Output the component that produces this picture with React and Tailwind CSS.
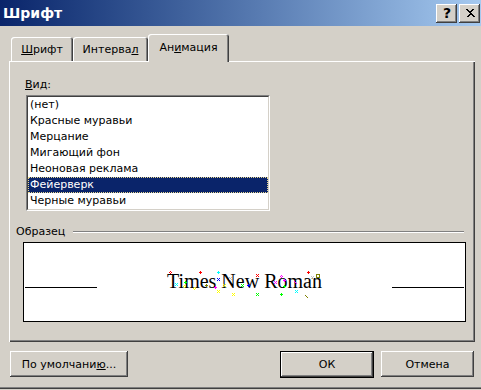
import React from 'react'

const RAISED = 'shadow-[inset_-1px_-1px_#404040,inset_1px_1px_#ffffff,inset_-2px_-2px_#808080,inset_2px_2px_#d4d0c8]'

const ITEMS = ['(нет)', 'Красные муравьи', 'Мерцание', 'Мигающий фон', 'Неоновая реклама', 'Фейерверк', 'Черные муравьи']

// sparkle bits around the sample text: [x, y, color, kind]
const SPARKS = [
  [146, 29, '#ff0000', 'dot'], [176, 29, '#ff0000', 'plus'], [194, 29, '#00ffff', 'plus'],
  [194, 36, '#0000ff', 'x'], [206, 35, '#c0c0c0', 'x'], [233, 32, '#ff0000', 'x'],
  [260, 37, '#ff00ff', 'plus'], [257, 33, '#ff00ff', 'dot'], [284, 29, '#ff0000', 'plus'],
  [293, 32, '#808000', 'sq'], [288, 34, '#c0c0c0', 'x'], [152, 41, '#00ffff', 'x'],
  [161, 39, '#00ff00', 'plus'], [182, 42, '#808000', 'plus'], [191, 44, '#ff00ff', 'plus'],
  [194, 48, '#ffff00', 'x'], [200, 42, '#ffff00', 'x'], [218, 42, '#00ff00', 'x'],
  [224, 42, '#0000ff', 'plus'], [209, 51, '#ffff00', 'x'], [233, 51, '#00ff00', 'x'],
  [251, 39, '#ff00ff', 'x'], [260, 43, '#00ff00', 'plus'], [257, 51, '#00ff00', 'plus'],
  [270, 38, '#ff00ff', 'line'], [272, 48, '#00ffff', 'x'], [281, 52, '#808000', 'line'],
  [160, 43, '#ffff00', 'dot'], [170, 45, '#ffff00', 'dot'],
]

function Spark({ x, y, c, k }) {
  if (k === 'plus') return (
    <g fill={c}>
      <rect x={x - 1} y={y} width="3" height="1" />
      <rect x={x} y={y - 1} width="1" height="3" />
    </g>
  )
  if (k === 'x') return (
    <g fill={c}>
      <rect x={x - 1} y={y - 1} width="1" height="1" />
      <rect x={x + 1} y={y - 1} width="1" height="1" />
      <rect x={x} y={y} width="1" height="1" />
      <rect x={x - 1} y={y + 1} width="1" height="1" />
      <rect x={x + 1} y={y + 1} width="1" height="1" />
    </g>
  )
  if (k === 'sq') return <rect x={x - 1} y={y - 1} width="3" height="3" fill="none" stroke={c} strokeWidth="1" shapeRendering="crispEdges" />
  if (k === 'line') return (
    <g fill={c}>
      <rect x={x} y={y} width="1" height="1" />
      <rect x={x + 1} y={y + 1} width="1" height="1" />
      <rect x={x + 2} y={y + 2} width="1" height="1" />
    </g>
  )
  return (
    <g fill={c}>
      <rect x={x} y={y - 1} width="1" height="1" />
      <rect x={x - 1} y={y} width="1" height="1" />
      <rect x={x + 1} y={y} width="1" height="1" />
      <rect x={x} y={y + 1} width="1" height="1" />
    </g>
  )
}

function Tab({ children, active, w }) {
  if (active) return (
    <div className={`${w} h-[28px] -mb-px relative z-10 bg-[#d4d0c8] rounded-t-[3px] shadow-[inset_1px_1px_#ffffff,inset_-1px_0_#404040,inset_-2px_0_#808080] flex justify-center pt-[7px]`}>
      {children}
    </div>
  )
  return (
    <div className={`${w} h-[24px] rounded-t-[3px] shadow-[inset_1px_1px_#ffffff,inset_-1px_0_#404040,inset_-2px_0_#808080] flex justify-center pt-[6px]`}>
      {children}
    </div>
  )
}

export default function App() {
  return (
    <div className="w-[481px] h-[390px] bg-[#d4d0c8] overflow-hidden font-['DejaVu_Sans',sans-serif] text-[11px] leading-[13px] text-black">
      {/* Title bar */}
      <div className="h-[26px] bg-linear-to-r from-[#0a246a] to-[#a6caf0] flex items-center justify-between">
        <span className="pl-[3px] text-white font-bold text-[14px] leading-[16px]">Шрифт</span>
        <div className="flex gap-[2px] mr-[1px]">
          <div className={`w-[21px] h-[19px] bg-[#d4d0c8] ${RAISED} flex items-center justify-center font-bold text-[14px] leading-none pl-px`}>?</div>
          <div className={`w-[21px] h-[19px] bg-[#d4d0c8] ${RAISED} flex items-center justify-center`}>
            <svg width="10" height="9" viewBox="0 0 10 9" shapeRendering="crispEdges">
              <path d="M1 0h2v1h1v1h2v-1h1v-1h2v1h-1v1h-1v1h-1v1h1v1h1v1h1v1h1v1h-2v-1h-1v-1h-2v1h-1v1h-2v-1h1v-1h1v-1h1v-1h-1v-1h-1v-1h-1z" fill="#000" />
            </svg>
          </div>
        </div>
      </div>

      {/* Tabs + panel */}
      <div className="mt-[8px] ml-[9px] w-[466px]">
        <div className="flex items-end h-[27px] pl-[2px]">
          <Tab w="w-[62px]"><span><span className="underline">Ш</span>рифт</span></Tab>
          <Tab w="w-[75px]"><span>Интерва<span className="underline">л</span></span></Tab>
          <Tab active w="w-[81px]"><span>Ан<span className="underline">и</span>мация</span></Tab>
        </div>
        <div className="h-[281px] shadow-[inset_1px_1px_#ffffff,inset_-1px_-1px_#404040,inset_-2px_-2px_#808080] pt-[17px]">
          <div className="ml-[16px]"><span className="underline">В</span>ид:</div>

          {/* List */}
          <div className="ml-[17px] mt-[4px] w-[244px] h-[116px] bg-white border-t border-l border-t-[#808080] border-l-[#808080] border-b border-r border-b-white border-r-white">
            <div className="h-full border-t border-l border-t-[#404040] border-l-[#404040] border-b border-r border-b-[#d4d0c8] border-r-[#d4d0c8]">
              {ITEMS.map((it, i) => (
                <div key={it} className={i === 5
                  ? 'h-[16px] leading-[14px] pl-px bg-[#0a246a] text-white border border-dotted border-[#e8d890]'
                  : 'h-[16px] leading-[16px] pl-[2px]'}>
                  {it}
                </div>
              ))}
            </div>
          </div>

          {/* Sample group */}
          <div className="ml-[7px] mt-[14px] w-[448px] flex items-center">
            <span>Образец</span>
            <div className="flex-1 ml-[8px] border-t border-t-[#808080] border-b border-b-white" />
          </div>
          <div className="ml-[14px] mt-[4px] w-[443px] h-[80px] bg-white border border-black relative">
            <div className="flex items-start pt-[28px] px-px">
              <div className="w-[72px] h-px bg-black mt-[16px]" />
              <div className="flex-1 text-center font-['Liberation_Serif',serif] text-[20px] leading-[20px]">Times New Roman</div>
              <div className="w-[72px] h-px bg-black mt-[16px]" />
            </div>
            <svg className="absolute left-0 top-0" width="441" height="78" viewBox="0 0 441 78" shapeRendering="crispEdges">
              {SPARKS.map(([x, y, c, k], i) => <Spark key={i} x={x} y={y} c={c} k={k} />)}
            </svg>
          </div>
        </div>
      </div>

      {/* Buttons */}
      <div className="mt-[9px] flex items-start pl-[10px] pr-[7px]">
        <div className={`w-[118px] h-[26px] ${RAISED} flex items-center justify-center`}>
          <span>По умолчани<span className="underline">ю</span>...</span>
        </div>
        <div className="flex-1" />
        <div className="w-[94px] h-[27px] border border-black">
          <div className={`w-full h-full ${RAISED} flex items-center justify-center`}>ОК</div>
        </div>
        <div className={`ml-[7px] w-[93px] h-[26px] ${RAISED} flex items-center justify-center`}>Отмена</div>
      </div>

      <div className="mt-[9px] h-px bg-[#808080]" />
      <div className="h-px bg-[#404040]" />
    </div>
  )
}
